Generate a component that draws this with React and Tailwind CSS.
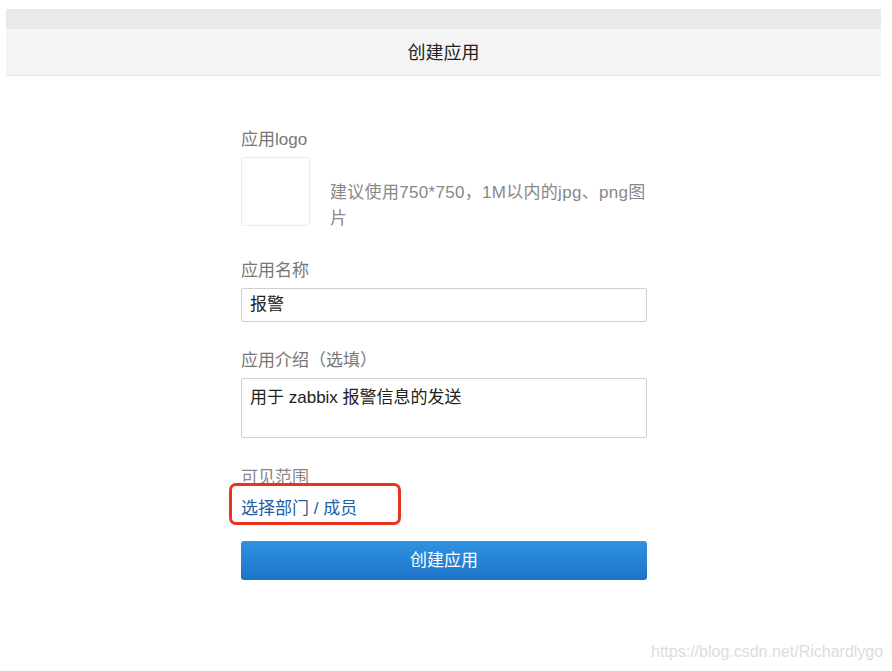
import React from "react";

export default function App() {
    const font = { fontFamily: '"Liberation Sans", "Noto Sans CJK SC", sans-serif' };

    return (
        <div className="relative w-[892px] h-[671px] bg-white overflow-hidden" style={font}>
            <div className="mx-[6px] mt-[9px] w-[875px]">
                {/* top strip + title bar */}
                <div className="h-[20px] bg-[#e9e9e9]" />
                <div className="h-[47px] pt-[3px] bg-[#f4f4f4] border-b border-[#e2e2e2] flex items-center justify-center text-[18px] text-[#222]">
                    创建应用
                </div>
            </div>

            <div className="ml-[241px] w-[406px] mt-[54px]">
                <div className="text-[17px] leading-[20px] text-[#777]">应用logo</div>
                <div className="flex items-start mt-[7px]">
                    <div className="w-[69px] h-[69px] shrink-0 border border-[#ebebeb] rounded-[3px] bg-white" />
                    <div className="ml-[20px] mt-[23px] text-[17px] leading-[26px] tracking-[0.3px] text-[#888] whitespace-nowrap">
                        建议使用750*750，1M以内的jpg、png图
                        <br />
                        片
                    </div>
                </div>

                <div className="mt-[29px] text-[17px] leading-[20px] text-[#777]">应用名称</div>
                <div className="mt-[7px] h-[34px] border border-[#cfcfcf] rounded-[2px] flex items-center px-[8px] text-[17px] text-[#222]">
                    报警
                </div>

                <div className="mt-[29px] text-[17px] leading-[20px] text-[#777]">应用介绍（选填）</div>
                <div className="mt-[7px] h-[60px] border border-[#cfcfcf] rounded-[2px] px-[8px] pt-[7px] text-[17px] leading-[24px] text-[#222]">
                    用于 zabbix 报警信息的发送
                </div>

                <div className="mt-[30px] text-[17px] leading-[20px] text-[#888]">可见范围</div>
                <div className="mt-[9px] text-[17px] leading-[24px] text-[#2160a6]">选择部门 / 成员</div>

                <button className="mt-[20px] w-full h-[39px] rounded-[3px] bg-gradient-to-b from-[#3192e2] to-[#1c74c7] text-white text-[17px] flex items-center justify-center">
                    创建应用
                </button>
            </div>

            {/* red highlight */}
            <div className="absolute left-[229px] top-[483px] w-[172px] h-[42px] border-[3px] border-[#e8341f] rounded-[7px]" />

            <div className="absolute left-[651px] top-[642px] text-[16px] leading-[20px] text-[#dcdcdc]">
                https://blog.csdn.net/Richardlygo
            </div>
        </div>
    );
}
